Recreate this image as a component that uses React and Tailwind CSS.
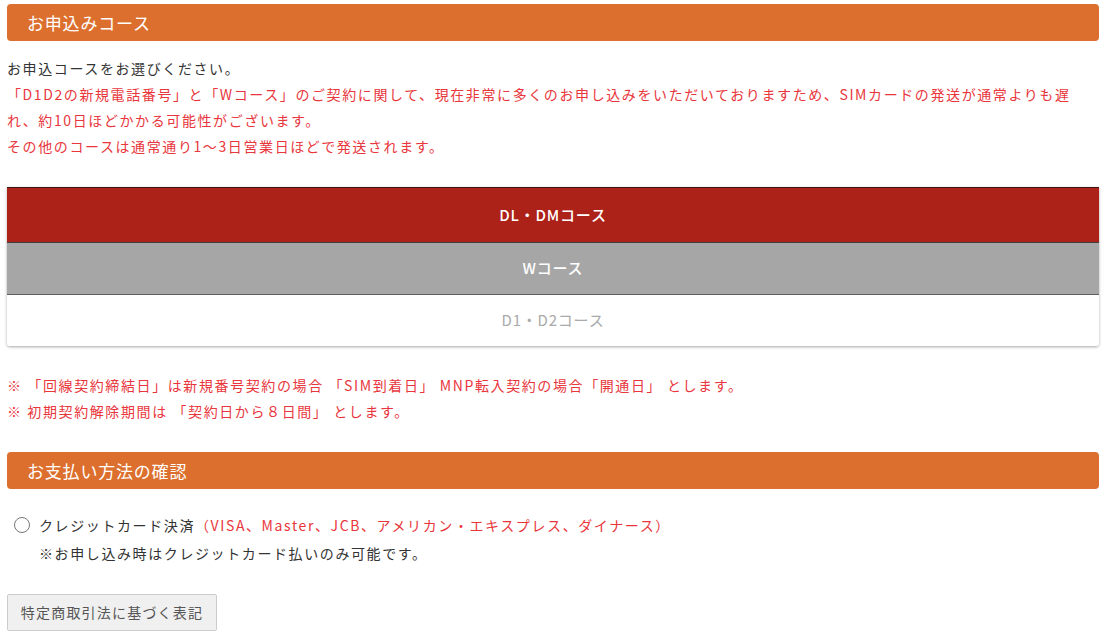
const font = { fontFamily: '"Noto Sans CJK JP", "Noto Sans", sans-serif' };

const SectionHeader = ({ children }) => (
  <div className="h-[37px] rounded-[4px] bg-[#dc6f2d] pl-[20px] flex items-center text-[17px] text-white tracking-[0.8px]">
    {children}
  </div>
);

const courses = [
  { label: "DL・DMコース", cls: "bg-[#ad2218] text-white font-medium border-t border-[#3d1410]" },
  { label: "Wコース", cls: "bg-[#a6a6a6] text-white font-medium border-t border-[#3f3f3f]" },
  { label: "D1・D2コース", cls: "bg-white text-[#aaaaaa] border-t border-[#5e5e5e]" },
];

export default function App() {
  return (
    <div className="bg-white min-h-screen px-[7px] pt-[4px] text-[#333333]" style={font}>
      <SectionHeader>お申込みコース</SectionHeader>

      <div className="mt-[14px] text-[14px] leading-[26px] tracking-[1.6px]">
        <p>お申込コースをお選びください。</p>
        <p className="text-[#e8363c]">
          「D1D2の新規電話番号」と「Wコース」のご契約に関して、現在非常に多くのお申し込みをいただいておりますため、SIMカードの発送が通常よりも遅れ、約10日ほどかかる可能性がございます。
        </p>
        <p className="text-[#e8363c]">その他のコースは通常通り1〜3日営業日ほどで発送されます。</p>
      </div>

      <div className="mt-[28px] rounded-b-[3px] shadow-[0_1px_3px_rgba(0,0,0,0.35)] overflow-hidden">
        {courses.map((c, i) => (
          <div
            key={c.label}
            className={`flex items-center justify-center text-[15px] tracking-[0.8px] ${i === 0 ? "h-[55px]" : "h-[52px]"} ${c.cls}`}
          >
            {c.label}
          </div>
        ))}
      </div>

      <div className="mt-[26px] text-[14px] leading-[26px] tracking-[1.6px] text-[#e8363c]">
        <p>※ 「回線契約締結日」は新規番号契約の場合 「SIM到着日」 MNP転入契約の場合「開通日」 とします。</p>
        <p>※ 初期契約解除期間は 「契約日から８日間」 とします。</p>
      </div>

      <div className="mt-[28px]">
        <SectionHeader>お支払い方法の確認</SectionHeader>
      </div>

      <div className="mt-[22px] text-[14px] leading-[28px] tracking-[1.6px]">
        <label className="flex items-center">
          <span className="ml-[7px] mr-[9px] w-[16px] h-[16px] rounded-full border border-[#777777] bg-white" />
          <span>
            クレジットカード決済<span className="text-[#e8363c]">（VISA、Master、JCB、アメリカン・エキスプレス、ダイナース）</span>
          </span>
        </label>
        <p className="pl-[32px]">※お申し込み時はクレジットカード払いのみ可能です。</p>
      </div>

      <button className="mt-[27px] h-[37px] w-[210px] border border-[#cccccc] bg-[#f0f0f0] text-[14px] tracking-[1.2px] text-[#555555] rounded-[2px]">
        特定商取引法に基づく表記
      </button>
    </div>
  );
}
